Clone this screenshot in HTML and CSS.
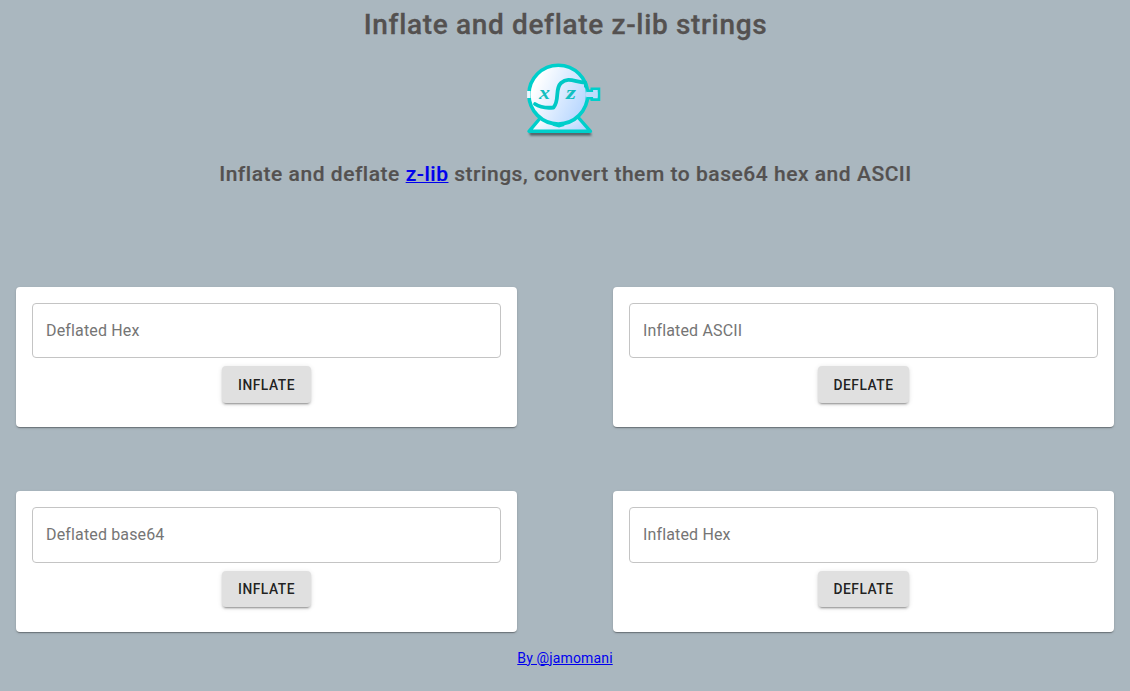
FILE: index.html
```html
<!DOCTYPE html>
<html lang="en">
<head>
<meta charset="utf-8">
<title>Inflate and deflate z-lib strings</title>
<link rel="stylesheet" href="styles.css">
</head>
<body>
<header class="header">
  <h1 class="title">Inflate and deflate z-lib strings</h1>
  <svg class="logo" viewBox="0 0 100 90" role="img" aria-label="Logo">
    <defs>
      <linearGradient id="glass" x1="0" y1="0.3" x2="1" y2="0.75">
        <stop offset="0.1" stop-color="#fff"/>
        <stop offset="1" stop-color="#b3d4ff"/>
      </linearGradient>
      <filter id="soft" x="-10%" y="-100%" width="120%" height="300%"><feGaussianBlur stdDeviation="0.8"/></filter>
    </defs>
    <path d="M14 77H75L77 80.500H15Z" fill="#4c5b60" filter="url(#soft)"/>
    <path d="M27 61L14 76.300H75.500L62 61Z" fill="url(#glass)" stroke="#00cfcb" stroke-width="3.400" stroke-linejoin="round"/>
    <circle cx="43.300" cy="39.600" r="29.400" fill="url(#glass)" stroke="#00cfcb" stroke-width="3.600"/>
    <path d="M38 69.300L44 71L49 69.500" fill="none" stroke="#00cfcb" stroke-width="3"/>
    <path d="M71.500 35.700H76.800V33.800H84V44.600H76.800V43.200H71.500" fill="#c0dcff" stroke="#00cfcb" stroke-width="2.600"/>
    <path d="M70.500 39.500H82.500" stroke="#bddcfb" stroke-width="4.500"/>
    <path d="M13.800 36V43" stroke="#e9f7ff" stroke-width="3.500"/>
    <path d="M20 49C26 53 34 53 38.500 52.500C45 45 39.500 34 46 28C53 22 59 26.500 70 27.500" fill="none" stroke="#00c9c6" stroke-width="3.800" stroke-linecap="round" stroke-linejoin="round"/>
    <path d="M69 27L75 37L69 32Z" fill="#00c9c6"/>
    <text class="logo-letter" x="24" y="44.300" textLength="11" lengthAdjust="spacingAndGlyphs">x</text>
    <text class="logo-letter" x="51" y="44.300" textLength="10" lengthAdjust="spacingAndGlyphs">z</text>
  </svg>
  <h2 class="subtitle">Inflate and deflate <a href="#">z-lib</a> strings, convert them to base64 hex and ASCII</h2>
</header>
<main class="grid">
  <section class="card"><input class="field" placeholder="Deflated Hex"><button class="button">Inflate</button></section>
  <section class="card"><input class="field" placeholder="Inflated ASCII"><button class="button">Deflate</button></section>
  <section class="card"><input class="field" placeholder="Deflated base64"><button class="button">Inflate</button></section>
  <section class="card"><input class="field" placeholder="Inflated Hex"><button class="button">Deflate</button></section>
</main>
<footer class="footer"><a href="#">By @jamomani</a></footer>
</body>
</html>
```
FILE: styles.css
```css
* { box-sizing: border-box; }
body {
  margin: 0;
  height: 691px;
  overflow: hidden;
  background: #aab7bf;
  font-family: Roboto, sans-serif;
}
a { color: #0000ee; }
.header {
  display: flex;
  flex-direction: column;
  align-items: center;
  height: 286.5px;
  color: #545150;
}
.title {
  margin: 4px 0 0;
  padding-left: 1px;
  font-size: 28px;
  font-weight: 500;
  line-height: 42px;
  letter-spacing: 0.66px;
  -webkit-text-stroke: 0.3px;
}
.logo {
  display: block;
  width: 100px;
  height: 90px;
  margin-top: 9px;
}
.logo-letter {
  fill: #14bfc0;
  font: italic bold 19px "Liberation Serif", serif;
}
.subtitle {
  margin: 13px 0 0;
  padding-left: 1px;
  font-size: 21px;
  font-weight: 500;
  line-height: 32px;
  letter-spacing: 0.53px;
  -webkit-text-stroke: 0.2px;
}
.subtitle a { text-decoration-thickness: 1px; }
.grid {
  display: grid;
  grid-template-columns: 1fr 1fr;
  column-gap: 96px;
  row-gap: 64px;
  padding: 0 16px;
}
.card {
  display: flex;
  flex-direction: column;
  align-items: center;
  gap: 8px;
  height: 140.5px;
  padding: 16px;
  border-radius: 4px;
  background: #fff;
  box-shadow: 0 2px 1px -1px rgba(0,0,0,.2), 0 1px 1px rgba(0,0,0,.14), 0 1px 3px rgba(0,0,0,.12);
}
.field {
  width: 100%;
  height: 55.8px;
  padding: 0 13px;
  border: 1px solid #c4c4c4;
  border-radius: 4px;
  font: 16px/24px Roboto, sans-serif;
  letter-spacing: 0.15px;
}
.field::placeholder { color: #757575; opacity: 1; }
.button {
  height: 36.500px;
  padding: 0 16px;
  border: 0;
  border-radius: 4px;
  background: #e0e0e0;
  color: rgba(0,0,0,.87);
  font: 500 13.8px/24px Roboto, sans-serif;
  letter-spacing: 0.5px;
  text-transform: uppercase;
  box-shadow: 0 3px 1px -2px rgba(0,0,0,.2), 0 2px 2px rgba(0,0,0,.14), 0 1px 5px rgba(0,0,0,.12);
}
.footer {
  padding-top: 16px;
  text-align: center;
  font-size: 14px;
  line-height: 20px;
  letter-spacing: 0.15px;
}
```
